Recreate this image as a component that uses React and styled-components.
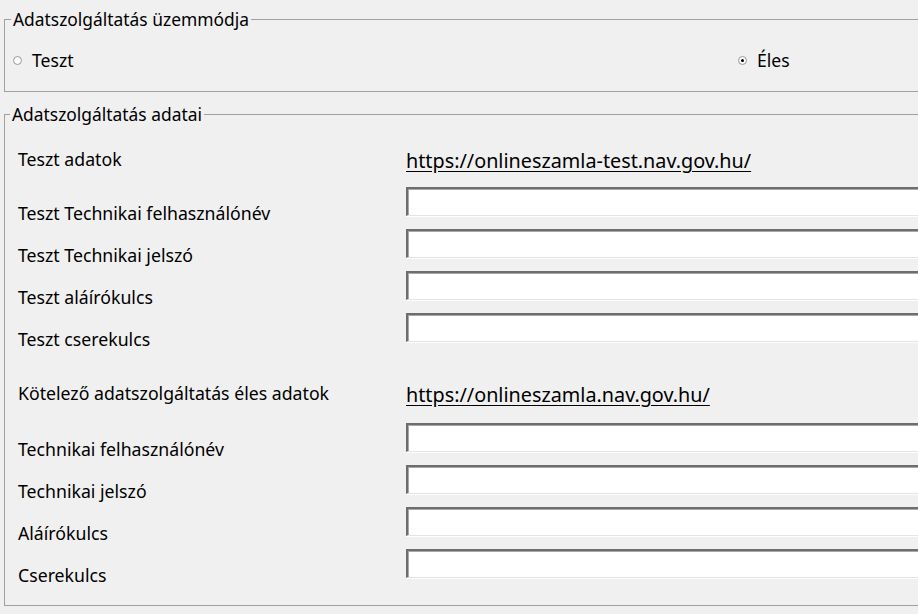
import styled, { createGlobalStyle } from 'styled-components'

const GlobalStyle = createGlobalStyle`
  html, body {
    margin: 0;
    padding: 0;
    background: #f0f0f0;
    overflow: hidden;
  }
  body {
    font-family: 'Noto Sans', 'DejaVu Sans', sans-serif;
    color: #000;
  }
`

const Page = styled.div`
  width: 918px;
  height: 614px;
  overflow: hidden;
  padding-top: 9px;
  box-sizing: border-box;
`

const Group = styled.fieldset`
  margin: 0 -40px ${(props) => props.$gap || 0}px 4px;
  border: 1px solid #a0a0a0;
  padding: ${(props) => props.$padding};
  min-width: 0;
`

const Legend = styled.legend`
  margin-left: ${(props) => props.$shift}px;
  padding: 0 2px;
  font-size: 17.4px;
  line-height: 20px;
`

const RadioRow = styled.div`
  display: grid;
  grid-template-columns: 725px auto;
  align-items: center;
  height: 22px;
`

const RadioOption = styled.label`
  display: flex;
  align-items: center;
  gap: 10px;
  font-size: 17.6px;
  line-height: 22px;
`

const RadioDot = styled.span`
  width: 9px;
  height: 9px;
  border-radius: 50%;
  box-sizing: border-box;
  border: 1px solid #9a9a9a;
  background: radial-gradient(circle, #fff 55%, #e6e6e6 100%);
  display: flex;
  align-items: center;
  justify-content: center;

  &::after {
    content: '';
    display: ${(props) => (props.$checked ? 'block' : 'none')};
    width: 3px;
    height: 3px;
    border-radius: 50%;
    background: #000;
  }
`

const LinkRow = styled.div`
  display: flex;
  align-items: flex-start;
  margin: ${(props) => props.$margin};
`

const Label = styled.div`
  width: 388px;
  flex-shrink: 0;
  font-size: 17.7px;
  line-height: 20px;
  padding-top: ${(props) => props.$top || 0}px;
`

const Link = styled.a`
  font-size: 19.8px;
  line-height: 24px;
  color: #000;
  text-decoration: underline;
  text-underline-offset: 3px;
  padding-top: 1px;
`

const FieldRow = styled.div`
  display: flex;
  align-items: flex-start;
  height: 42px;
`

const Input = styled.input`
  flex: 1;
  height: 29px;
  box-sizing: border-box;
  margin: 0;
  background: #fff;
  border: none;
  border-top: 2px solid #6d6d6d;
  border-left: 2px solid #6d6d6d;
  border-bottom: 1px solid #e3e3e3;
  box-shadow: inset 1px 1px 0 #a8a8a8, 0 1px 0 #fff;
  font-family: inherit;
  font-size: 16px;
  outline: none;
`

const testFields = [
  'Teszt Technikai felhasználónév',
  'Teszt Technikai jelszó',
  'Teszt aláírókulcs',
  'Teszt cserekulcs',
]

const liveFields = [
  'Technikai felhasználónév',
  'Technikai jelszó',
  'Aláírókulcs',
  'Cserekulcs',
]

const Fields = ({ items }) =>
  items.map((name) => (
    <FieldRow key={name}>
      <Label $top={16}>{name}</Label>
      <Input type="text" />
    </FieldRow>
  ))

const App = () => {
  return (
    <Page>
      <GlobalStyle />
      <Group $padding="20px 0 20px 8px" $gap={12}>
        <Legend $shift={-2}>Adatszolgáltatás üzemmódja</Legend>
        <RadioRow>
          <RadioOption>
            <RadioDot />
            Teszt
          </RadioOption>
          <RadioOption>
            <RadioDot $checked />
            Éles
          </RadioOption>
        </RadioRow>
      </Group>

      <Group $padding="0 0 14px 13px">
        <Legend $shift={-8}>Adatszolgáltatás adatai</Legend>
        <LinkRow $margin="24px 0 14px">
          <Label $top={1}>Teszt adatok</Label>
          <Link href="#">https://onlineszamla-test.nav.gov.hu/</Link>
        </LinkRow>
        <Fields items={testFields} />
        <LinkRow $margin="27px 0 16px">
          <Label $top={1}>Kötelező adatszolgáltatás éles adatok</Label>
          <Link href="#">https://onlineszamla.nav.gov.hu/</Link>
        </LinkRow>
        <Fields items={liveFields} />
      </Group>
    </Page>
  )
}

export default App
